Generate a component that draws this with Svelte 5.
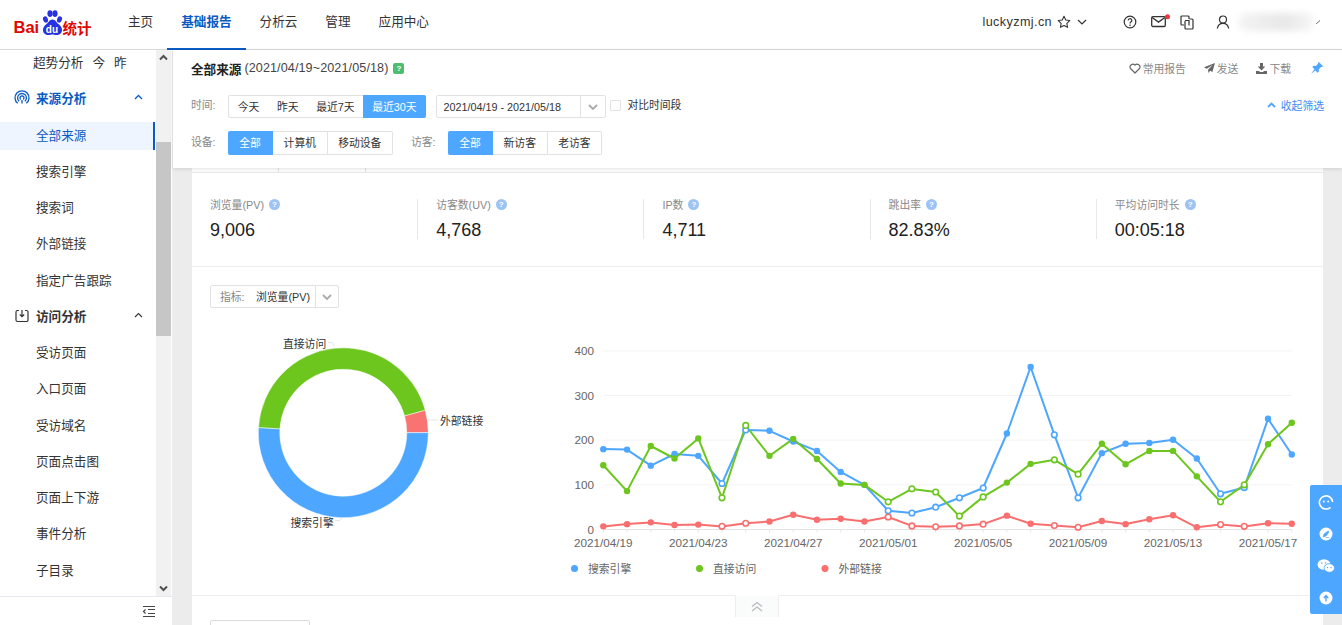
<script lang="ts">
	const navItems = ["主页", "基础报告", "分析云", "管理", "应用中心"];
	const sourceItems = ["全部来源", "搜索引擎", "搜索词", "外部链接", "指定广告跟踪"];
	const visitItems = ["受访页面", "入口页面", "受访域名", "页面点击图", "页面上下游", "事件分析", "子目录"];

	const stats = [
		{ label: "浏览量(PV)", value: "9,006" },
		{ label: "访客数(UV)", value: "4,768" },
		{ label: "IP数", value: "4,711" },
		{ label: "跳出率", value: "82.83%" },
		{ label: "平均访问时长", value: "00:05:18" },
	];

	// donut slices, angles in degrees counter-clockwise from east
	const cx = 343.3;
	const cy = 432.7;
	const slices = [
		{ color: "#f87372", from: 0, to: 15.4 },
		{ color: "#6cc61e", from: 15.4, to: 176.6 },
		{ color: "#4da6ff", from: 176.6, to: 360 },
	];

	function pt(r: number, deg: number) {
		const a = (deg * Math.PI) / 180;
		return `${(cx + r * Math.cos(a)).toFixed(2)} ${(cy - r * Math.sin(a)).toFixed(2)}`;
	}

	function slicePath(from: number, to: number) {
		const big = to - from > 180 ? 1 : 0;
		return `M${pt(85, from)} A85 85 0 ${big} 0 ${pt(85, to)} L${pt(63.5, to)} A63.5 63.5 0 ${big} 1 ${pt(63.5, from)} Z`;
	}

	// line chart
	const x0 = 603.3;
	const stepX = 23.74;
	const y0 = 529.5;
	const unitY = 178.6 / 400;
	const toX = (i: number) => x0 + i * stepX;
	const toY = (v: number) => y0 - v * unitY;

	const series = [
		{
			name: "搜索引擎",
			color: "#4da6ff",
			legendX: 574.5,
			data: [180, 179, 143, 169, 165, 103, 223, 221, 197, 176, 129, 100, 42, 37, 50, 71, 93, 215, 364, 212, 71, 171, 192, 194, 201, 159, 80, 94, 248, 168],
		},
		{
			name: "直接访问",
			color: "#6cc61e",
			legendX: 699.5,
			data: [144, 86, 187, 159, 204, 71, 233, 165, 203, 158, 103, 100, 62, 91, 84, 30, 73, 105, 147, 156, 124, 192, 146, 176, 176, 119, 62, 100, 191, 239],
		},
		{
			name: "外部链接",
			color: "#f96f6f",
			legendX: 825,
			data: [7, 12, 16, 10, 11, 7, 14, 18, 33, 22, 24, 18, 28, 8, 6, 8, 12, 31, 13, 9, 5, 19, 12, 23, 32, 5, 11, 7, 14, 13],
		},
	];

	// days off get a hollow marker
	const hollow = [5, 6, 12, 13, 14, 15, 16, 19, 20, 26, 27];
	const dateLabels = ["2021/04/19", "2021/04/23", "2021/04/27", "2021/05/01", "2021/05/05", "2021/05/09", "2021/05/13", "2021/05/17"];
	const points = (data: number[]) => data.map((v, i) => `${toX(i).toFixed(1)},${toY(v).toFixed(1)}`).join(" ");
</script>

<div class="page">
	<header class="topbar">
		<svg class="logo" width="80" height="30" viewBox="14 8 80 30">
			<text x="13.5" y="33.4" class="logo-bai">Bai</text>
			<ellipse cx="45.5" cy="19.5" rx="2.4" ry="3.2" fill="#2932e1" transform="rotate(-20 45.5 19.5)" />
			<ellipse cx="50" cy="13.6" rx="2.6" ry="3.4" fill="#2932e1" />
			<ellipse cx="55" cy="13.6" rx="2.6" ry="3.4" fill="#2932e1" />
			<ellipse cx="59.5" cy="19.5" rx="2.4" ry="3.2" fill="#2932e1" transform="rotate(20 59.5 19.5)" />
			<path d="M52.5 19.5c3 0 4 3 6 4.5c2.5 2 3.500 4 3.500 6c0 3.500-2.500 5-5.500 5c-1.500 0-2.800-.6-4-.6s-2.500.6-4 .6c-3 0-5.500-1.500-5.500-5c0-2 1-4 3.500-6c2-1.500 3-4.500 6-4.500z" fill="#2932e1" />
			<text x="45.8" y="32.5" class="logo-du">du</text>
			<text x="62.5" y="34" class="logo-cn">统计</text>
		</svg>
		<nav class="nav">
			{#each navItems as item, i}
				<span class="nav-item" class:active={i === 1}>{item}</span>
			{/each}
		</nav>
		<div class="top-right">
			<span class="site">luckyzmj.cn</span>
			<svg class="star" width="14" height="14" viewBox="0 0 14 14"><path d="M7 1.3l1.75 3.7 4 .55-2.9 2.800.7 4L7 10.450 3.450 12.350l.7-4-2.900-2.800 4-.55z" fill="none" stroke="#333" stroke-width="1.1" stroke-linejoin="round" /></svg>
			<svg class="caret" width="10" height="6" viewBox="0 0 10 6"><path d="M1 1l4 4 4-4" fill="none" stroke="#333" stroke-width="1.2" /></svg>
			<svg class="help" width="14" height="14" viewBox="0 0 14 14"><circle cx="7" cy="7" r="5.8" fill="none" stroke="#333" stroke-width="1.2" /><path d="M5.2 5.6a1.8 1.8 0 1 1 2.7 1.500c-.6.350-.9.700-.9 1.300" fill="none" stroke="#333" stroke-width="1.2" /><circle cx="7" cy="10.2" r=".8" fill="#333" /></svg>
			<svg class="mail" width="20" height="14" viewBox="0 0 20 14"><rect x=".7" y="2.7" width="13.6" height="9.8" rx="1.2" fill="none" stroke="#333" stroke-width="1.3" /><path d="M1.2 3.5l6.3 4.6 6.3-4.6" fill="none" stroke="#333" stroke-width="1.3" /><circle cx="16.5" cy="2.7" r="2.5" fill="#f4333c" /></svg>
			<svg class="copy" width="14" height="15" viewBox="0 0 14 15"><path d="M9 4V2a1 1 0 0 0-1-1H2a1 1 0 0 0-1 1v7a1 1 0 0 0 1 1h2" fill="none" stroke="#333" stroke-width="1.2" /><path d="M9.5 4H12a1 1 0 0 1 1 1v8a1 1 0 0 1-1 1H6a1 1 0 0 1-1-1V6" fill="none" stroke="#333" stroke-width="1.2" /><path d="M5 5.5h4v5" fill="none" stroke="#333" stroke-width="1.2" /></svg>
			<svg class="user" width="14" height="14" viewBox="0 0 14 14"><circle cx="7" cy="4.5" r="3.5" fill="none" stroke="#333" stroke-width="1.2" /><path d="M1.3 13.5c.5-3.300 2.700-5.200 5.700-5.200s5.200 1.900 5.700 5.200" fill="none" stroke="#333" stroke-width="1.2" /></svg>
			<span class="blurred"></span>
			<svg class="tiny" width="5" height="4" viewBox="0 0 5 4"><path d="M0 4l4-3.500" stroke="#666" fill="none" /></svg>
		</div>
	</header>

	<div class="body">
		<aside class="sidebar">
			<div class="menu-wrap">
				<div class="menu">
					<div class="list">
						<div class="item trend">超势分析<span class="day">今</span><span class="day">昨</span></div>
						<div class="item group blue">
							<svg class="group-icon" width="16" height="16" viewBox="0 0 16 16" fill="none" stroke="#0a5bc4" stroke-width="1.3">
								<path d="M3.700 13.300a7 7 0 1 1 8.600 0" />
								<path d="M5.200 11.300a4.400 4.400 0 1 1 5.600 0" />
								<path d="M6.700 9.400a2 2 0 1 1 2.600 0" />
								<path d="M8 10v3.500" />
							</svg>
							来源分析
							<svg class="fold" width="9" height="6" viewBox="0 0 9 6"><path d="M1 5l3.500-3.500L8 5" fill="none" stroke="#0a5bc4" stroke-width="1.3" /></svg>
						</div>
						{#each sourceItems as item, i}
							<div class="item" class:current={i === 0}>{item}</div>
						{/each}
						<div class="item group">
							<svg class="group-icon" width="16" height="16" viewBox="0 0 16 16" fill="none" stroke="#333" stroke-width="1.2">
								<path d="M5 2.500H3.500a1.500 1.500 0 0 0-1.500 1.500v8a1.500 1.500 0 0 0 1.500 1.500h9a1.500 1.500 0 0 0 1.500-1.500V4a1.500 1.500 0 0 0-1.500-1.500H11" />
								<path d="M8 2v6.500M5.800 6.500L8 8.700l2.200-2.200" />
							</svg>
							访问分析
							<svg class="fold" width="9" height="6" viewBox="0 0 9 6"><path d="M1 5l3.500-3.500L8 5" fill="none" stroke="#333" stroke-width="1.1" /></svg>
						</div>
						{#each visitItems as item}
							<div class="item">{item}</div>
						{/each}
					</div>
				</div>
				<div class="scrollbar">
					<svg class="arrow" width="15" height="16" viewBox="0 0 15 16"><path d="M4 9.500l3.500-3.500 3.500 3.500" fill="none" stroke="#505050" stroke-width="2" /></svg>
					<div class="track"><div class="thumb"></div></div>
					<svg class="arrow" width="15" height="16" viewBox="0 0 15 16"><path d="M4 6.500l3.500 3.500 3.500-3.500" fill="none" stroke="#505050" stroke-width="2" /></svg>
				</div>
			</div>
			<div class="collapse">
				<svg width="14" height="13" viewBox="0 0 14 13" fill="none" stroke="#444" stroke-width="1.2">
					<path d="M1 1.500h12M6 4.500h7M6 8.500h7M1 11.500h12" />
					<path d="M3.500 4.500L1.500 6.500l2 2" />
				</svg>
			</div>
		</aside>

		<main class="content">
			<section class="filters">
				<div class="title-row">
					<strong class="title">全部来源</strong>
					<span class="range">(2021/04/19~2021/05/18)</span>
					<span class="badge">?</span>
					<div class="actions">
						<span class="action">
							<svg width="12" height="11" viewBox="0 0 12 11"><path d="M6 10L1.500 5.500A2.800 2.800 0 0 1 6 2.200a2.800 2.800 0 0 1 4.500 3.300z" fill="none" stroke="#666" stroke-width="1.2" stroke-linejoin="round" /></svg>
							常用报告
						</span>
						<span class="action">
							<svg width="11" height="10" viewBox="0 0 11 10"><path d="M11 0L0 4.300l2.800 1.400L9 1.800 4.200 6.500V10l1.900-2.200 2.300 1.100z" fill="#666" /></svg>
							发送
						</span>
						<span class="action">
							<svg width="11" height="11" viewBox="0 0 11 11"><path d="M4 0h3v3.500h2.300L5.500 7.500 1.700 3.500H4zM0 8h3l1 1h3l1-1h3v3H0z" fill="#666" /></svg>
							下载
						</span>
						<svg class="pin" width="14" height="14" viewBox="0 0 14 14"><path d="M8.600.8l4.600 4.600-1.300.6-.6-.2-2.500 2.400.1 2.400-1.200 1.200-2.300-2.300L1 13l3.500-4.700L2.300 6l1.200-1.200 2.400.1 2.400-2.500-.2-.6z" fill="#4da6ff" /></svg>
					</div>
				</div>
				<div class="filter-row">
					<span class="label">时间:</span>
					<div class="btn-group tight">
						<span class="btn plain">今天</span>
						<span class="btn plain">昨天</span>
						<span class="btn plain">最近7天</span>
						<span class="btn on">最近30天</span>
					</div>
					<div class="date">
						<span class="date-text">2021/04/19 - 2021/05/18</span>
						<span class="date-caret">
							<svg width="10" height="6" viewBox="0 0 10 6"><path d="M1 1l4 4 4-4" fill="none" stroke="#aaa" stroke-width="1.8" /></svg>
						</span>
					</div>
					<span class="checkbox"></span>
					<span class="check-label">对比时间段</span>
					<span class="fold-link">
						<svg width="9" height="6" viewBox="0 0 9 6"><path d="M1 5l3.500-3.500L8 5" fill="none" stroke="#4da6ff" stroke-width="1.8" /></svg>
						收起筛选
					</span>
				</div>
				<div class="filter-row second">
					<span class="label">设备:</span>
					<div class="btn-group">
						<span class="btn on">全部</span>
						<span class="btn">计算机</span>
						<span class="btn">移动设备</span>
					</div>
					<span class="label visitor">访客:</span>
					<div class="btn-group">
						<span class="btn on">全部</span>
						<span class="btn">新访客</span>
						<span class="btn">老访客</span>
					</div>
				</div>
			</section>

			<div class="tab-sliver"><span></span><span></span></div>

			<div class="card">
				<div class="stats">
					{#each stats as stat}
						<div class="stat">
							<div class="stat-label">{stat.label}<span class="tip">?</span></div>
							<div class="stat-value">{stat.value}</div>
						</div>
					{/each}
				</div>

				<div class="chart-section">
					<div class="select">
						<span class="select-key">指标:</span>
						<span class="select-val">浏览量(PV)</span>
						<span class="select-caret">
							<svg width="10" height="6" viewBox="0 0 10 6"><path d="M1 1l4 4 4-4" fill="none" stroke="#aaa" stroke-width="1.8" /></svg>
						</span>
					</div>
					<div class="charts">
						<svg class="donut" width="350" height="278" viewBox="192 317 350 278">
							{#each slices as s}
								<path d={slicePath(s.from, s.to)} fill={s.color} stroke="#fff" stroke-width=".5" />
							{/each}
							<path d="M328 342.500h4.500l1.500 3.500M428 420h10M335 520.500h5l1.500-2.500" fill="none" stroke="#e6e6e6" />
							<text x="283" y="347.500" class="pie-label">直接访问</text>
							<text x="440" y="425" class="pie-label">外部链接</text>
							<text x="290.500" y="527" class="pie-label">搜索引擎</text>
						</svg>
						<svg class="line" width="781" height="278" viewBox="542 317 781 278">
							{#each [100, 200, 300, 400] as v}
								<line x1={x0} x2={toX(29)} y1={toY(v)} y2={toY(v)} stroke="#f3f3f3" />
							{/each}
							<line x1={x0} x2={toX(29)} y1={y0} y2={y0} stroke="#e4e4e4" />
							{#each series[0].data as _, i}
								<line x1={toX(i)} x2={toX(i)} y1={y0} y2={y0 + 3} stroke="#e8e8e8" />
							{/each}
							{#each [0, 100, 200, 300, 400] as v}
								<text x="594" y={toY(v) + 4} text-anchor="end" class="axis">{v}</text>
							{/each}
							{#each dateLabels as d, i}
								<text x={toX(i * 4)} y="547" text-anchor="middle" class="axis">{d}</text>
							{/each}
							{#each series as s}
								<polyline points={points(s.data)} fill="none" stroke={s.color} stroke-width="2" stroke-linejoin="round" />
							{/each}
							{#each series as s}
								{#each s.data as v, i}
									{#if hollow.includes(i)}
										<circle cx={toX(i)} cy={toY(v)} r="2.800" fill="#fff" stroke={s.color} stroke-width="1.600" />
									{:else}
										<circle cx={toX(i)} cy={toY(v)} r="3.200" fill={s.color} />
									{/if}
								{/each}
							{/each}
							{#each series as s}
								<circle cx={s.legendX} cy="568.500" r="3.500" fill={s.color} />
								<text x={s.legendX + 13.5} y="573" class="legend">{s.name}</text>
							{/each}
						</svg>
					</div>
				</div>

				<div class="lower">
					<div class="handle">
						<svg width="14" height="11" viewBox="0 0 14 11" fill="none" stroke="#b8bcc0" stroke-width="1.3"><path d="M2 5.500l5-4 5 4M2 10l5-4 5 4" /></svg>
					</div>
					<div class="lower-box"></div>
				</div>
			</div>
		</main>
	</div>

	<div class="float-bar">
		<svg width="16" height="16" viewBox="0 0 16 16"><path d="M12.500 13.300A6.600 6.600 0 1 1 14.600 8" fill="none" stroke="#fff" stroke-width="1.6" /><circle cx="5.800" cy="7.500" r="1" fill="#fff" /><circle cx="10.200" cy="7.500" r="1" fill="#fff" /></svg>
		<svg width="16" height="16" viewBox="0 0 16 16"><circle cx="8" cy="8" r="6.500" fill="#fff" /><path d="M5 11l1-3 4-3 1 1-3 4zM7.500 11.500h4" fill="#4da6ff" stroke="#4da6ff" stroke-width=".6" /></svg>
		<svg width="18" height="16" viewBox="0 0 18 16"><ellipse cx="7" cy="6.500" rx="6.500" ry="5.300" fill="#fff" /><ellipse cx="12.300" cy="10" rx="5.200" ry="4.300" fill="#fff" stroke="#4da6ff" stroke-width=".8" /><circle cx="4.800" cy="5" r=".8" fill="#4da6ff" /><circle cx="8.500" cy="5" r=".8" fill="#4da6ff" /><circle cx="10.500" cy="9.500" r=".7" fill="#4da6ff" /><circle cx="14" cy="9.500" r=".7" fill="#4da6ff" /></svg>
		<svg width="16" height="16" viewBox="0 0 16 16"><circle cx="8" cy="8" r="6.500" fill="#fff" /><path d="M8 11.500V6M5.800 8L8 5.500 10.200 8" fill="none" stroke="#4da6ff" stroke-width="1.4" /></svg>
	</div>
</div>

<style>
	:global(body) {
		margin: 0;
		background: #ececec;
	}

	.page {
		position: relative;
		width: 1342px;
		height: 625px;
		overflow: hidden;
		display: flex;
		flex-direction: column;
		font-family: "Liberation Sans", "Noto Sans CJK SC", sans-serif;
		font-size: 10.8px;
		color: #333;
	}

	.topbar {
		flex: none;
		height: 50px;
		box-sizing: border-box;
		background: #fff;
		border-bottom: 1px solid #d9d9d9;
		display: flex;
		align-items: stretch;
		padding-left: 14px;
	}

	.logo {
		margin-top: 8px;
		flex: none;
	}

	.logo-bai {
		font-size: 16.5px;
		font-weight: 700;
		fill: #e10601;
	}

	.logo-du {
		font-size: 10px;
		font-weight: 700;
		fill: #fff;
	}

	.logo-cn {
		font-size: 14.5px;
		font-weight: 700;
		fill: #e10601;
	}

	.nav {
		display: flex;
		margin-left: 20px;
	}

	.nav-item {
		padding: 0 14px;
		line-height: 44px;
		height: 50px;
		box-sizing: border-box;
		font-size: 12.6px;
		color: #333;
	}

	.nav-item.active {
		color: #0a5bc4;
		font-weight: 700;
		border-bottom: 2px solid #0a5bc4;
	}

	.top-right {
		margin-left: auto;
		display: flex;
		align-items: center;
		padding-right: 21px;
		padding-bottom: 5px;
	}

	.site {
		font-size: 12.6px;
		letter-spacing: 0.4px;
		margin-right: 5px;
	}

	.caret {
		margin-left: 6px;
	}

	.help {
		margin-left: 36px;
	}

	.mail {
		margin-left: 14px;
		margin-top: -2px;
	}

	.copy {
		margin-left: 9px;
	}

	.user {
		margin-left: 22px;
	}

	.blurred {
		width: 76px;
		height: 18px;
		margin-left: 8px;
		border-radius: 9px;
		background: linear-gradient(90deg, #f4f4f4, #e8e8e8 60%, #f6f6f6);
		filter: blur(3px);
	}

	.tiny {
		margin-left: 2px;
	}

	.body {
		flex: 1;
		min-height: 0;
		display: flex;
	}

	.sidebar {
		flex: none;
		width: 172px;
		background: #fff;
		display: flex;
		flex-direction: column;
	}

	.menu-wrap {
		height: 546px;
		display: flex;
	}

	.menu {
		width: 156px;
		overflow: hidden;
	}

	.list {
		margin-top: -5px;
		display: flex;
		flex-direction: column;
	}

	.item {
		display: flex;
		align-items: center;
		flex: none;
		box-sizing: border-box;
		height: 28.25px;
		margin: 4px 0;
		padding: 0 0 3px 36px;
		font-size: 12.6px;
		color: #333;
		position: relative;
	}

	.item.trend {
		padding-left: 33px;
	}

	.day {
		margin-left: 9px;
	}

	.item.group {
		font-weight: 700;
	}

	.item.blue {
		color: #0a5bc4;
	}

	.group-icon {
		position: absolute;
		left: 14px;
		top: 5px;
	}

	.fold {
		position: absolute;
		left: 134px;
		top: 9px;
	}

	.item.current {
		background: #eef5fe;
		color: #0a5bc4;
		width: 155px;
		border-right: 2px solid #0a5bc4;
	}

	.scrollbar {
		width: 15px;
		background: #f1f1f1;
		display: flex;
		flex-direction: column;
	}

	.arrow {
		flex: none;
		display: block;
	}

	.track {
		flex: 1;
		padding-top: 76px;
	}

	.thumb {
		height: 194px;
		background: #c6c6c6;
	}

	.collapse {
		flex: 1;
		border-top: 1px solid #e6e6ef;
		display: flex;
		justify-content: flex-end;
		align-items: center;
		padding-right: 16px;
	}

	.content {
		flex: 1;
		min-width: 0;
		display: flex;
		flex-direction: column;
	}

	.filters {
		flex: none;
		height: 118px;
		box-sizing: border-box;
		margin-left: 1px;
		padding: 9px 18px 0;
		background: #fff;
		box-shadow: 0 1px 4px rgba(0, 0, 0, 0.12);
		position: relative;
	}

	.title-row {
		display: flex;
		align-items: center;
		height: 18px;
	}

	.title {
		font-size: 12.6px;
		color: #222;
	}

	.range {
		font-size: 12.6px;
		letter-spacing: 0.1px;
		margin-left: 3px;
		color: #444;
	}

	.badge {
		width: 11px;
		height: 11px;
		margin-left: 5px;
		border-radius: 2px;
		background: #4dbd70;
		color: #fff;
		font-size: 8px;
		font-weight: 700;
		line-height: 11px;
		text-align: center;
	}

	.actions {
		margin-left: auto;
		display: flex;
		align-items: center;
		color: #888;
	}

	.action {
		display: flex;
		align-items: center;
		gap: 2px;
		margin-right: 18px;
	}

	.pin {
		margin-left: 1px;
	}

	.filter-row {
		display: flex;
		align-items: stretch;
		height: 23px;
		margin-top: 18px;
	}

	.filter-row.second {
		height: 24px;
		margin-top: 13px;
	}

	.label {
		width: 37px;
		flex: none;
		color: #888;
		line-height: 20px;
	}

	.second .label {
		line-height: 22px;
	}

	.label.visitor {
		margin-left: 18px;
	}

	.btn-group {
		display: flex;
		border-radius: 2px;
	}

	.btn {
		display: flex;
		align-items: center;
		justify-content: center;
		box-sizing: border-box;
		padding: 0 10.6px 2px;
		border: 1px solid #e2e2e2;
		border-left: 0;
		background: #fff;
		color: #333;
	}

	.btn:last-child {
		border-radius: 0 2px 2px 0;
	}

	.tight .btn {
		padding: 0 8.8px 2px;
	}

	.btn.plain:first-child {
		border-left: 1px solid #e2e2e2;
		border-radius: 2px 0 0 2px;
	}

	.btn.plain {
		border-right: 0;
	}

	.btn.on {
		background: #4da6ff;
		border-color: #4da6ff;
		color: #fff;
	}

	.btn.on:first-child {
		width: 45px;
		border-radius: 2px 0 0 2px;
	}

	.date {
		width: 170px;
		box-sizing: border-box;
		margin-left: 10px;
		border: 1px solid #e2e2e2;
		border-radius: 2px;
		display: flex;
		align-items: center;
		padding-left: 6px;
	}

	.date-text {
		flex: 1;
	}

	.date-caret,
	.select-caret {
		width: 24px;
		height: 100%;
		border-left: 1px solid #e2e2e2;
		display: flex;
		align-items: center;
		justify-content: center;
	}

	.checkbox {
		width: 11px;
		height: 11px;
		box-sizing: border-box;
		margin: 5px 0 0 4px;
		border: 1px solid #e2e2e2;
		border-radius: 1px;
	}

	.check-label {
		margin-left: 6px;
		line-height: 20px;
	}

	.fold-link {
		margin-left: auto;
		color: #3d8bf0;
		display: flex;
		align-items: center;
		gap: 5px;
		height: 20px;
	}

	.tab-sliver {
		flex: none;
		height: 4px;
		margin-left: 20px;
		margin-right: 19px;
		background: #fff;
		display: flex;
	}

	.tab-sliver span {
		width: 86px;
		border-right: 1px solid #e4e4e4;
	}

	.card {
		flex: 1;
		min-height: 0;
		margin: 0 19px 0 20px;
		background: #fff;
		border-top: 1px solid #e6e6e6;
		display: flex;
		flex-direction: column;
		overflow: hidden;
	}

	.stats {
		flex: none;
		height: 94px;
		box-sizing: border-box;
		border-bottom: 1px solid #eeeeee;
		padding-top: 26px;
		display: grid;
		grid-template-columns: repeat(5, 1fr);
		align-items: start;
	}

	.stat {
		height: 40px;
		padding-left: 18px;
		border-right: 1px solid #e8e8e8;
	}

	.stat:last-child {
		border-right: 0;
	}

	.stat-label {
		display: flex;
		align-items: center;
		height: 10px;
		color: #888;
	}

	.tip {
		width: 11px;
		height: 11px;
		margin-left: 5px;
		border-radius: 50%;
		background: #9cc3f3;
		color: #fff;
		font-size: 8px;
		font-weight: 700;
		line-height: 11px;
		text-align: center;
	}

	.stat-value {
		margin-top: 10px;
		font-size: 18px;
		line-height: 22px;
		color: #222;
	}

	.chart-section {
		flex: none;
		height: 328px;
		box-sizing: border-box;
		padding-top: 18px;
	}

	.select {
		width: 129px;
		height: 23px;
		box-sizing: border-box;
		margin-left: 18px;
		border: 1px solid #e2e2e2;
		border-radius: 2px;
		display: flex;
		align-items: center;
		padding-left: 9px;
	}

	.select-key {
		color: #888;
		width: 36px;
		flex: none;
		padding-bottom: 2px;
	}

	.select-val {
		flex: 1;
		white-space: nowrap;
		padding-bottom: 2px;
	}

	.select-caret {
		width: 22px;
		flex: none;
	}

	.charts {
		display: flex;
		margin-top: 9px;
	}

	.donut,
	.line {
		display: block;
		flex: none;
	}

	.pie-label {
		font-size: 10.8px;
		fill: #333;
	}

	.axis {
		font-size: 11.7px;
		fill: #666;
	}

	.legend {
		font-size: 10.8px;
		fill: #666;
	}

	.lower {
		flex: 1;
		position: relative;
		border-top: 1px solid #eeeeee;
		padding: 24px 0 0 18px;
	}

	.lower-box {
		width: 100px;
		height: 30px;
		box-sizing: border-box;
		border: 1px solid #dcdcdc;
		border-radius: 2px;
	}

	.handle {
		position: absolute;
		left: 543px;
		top: -1px;
		width: 44px;
		height: 22px;
		box-sizing: border-box;
		background: #fafbfb;
		border-left: 1px solid #eeeeee;
		border-right: 1px solid #eeeeee;
		border-top: 1px solid #fff;
		display: flex;
		align-items: center;
		justify-content: center;
	}

	.float-bar {
		position: absolute;
		right: 0;
		top: 485px;
		width: 32px;
		height: 129px;
		border-radius: 2px 0 0 2px;
		background: #4da6ff;
		display: flex;
		flex-direction: column;
		align-items: center;
		justify-content: space-between;
		padding: 9px 0 8px;
		box-sizing: border-box;
	}
</style>
